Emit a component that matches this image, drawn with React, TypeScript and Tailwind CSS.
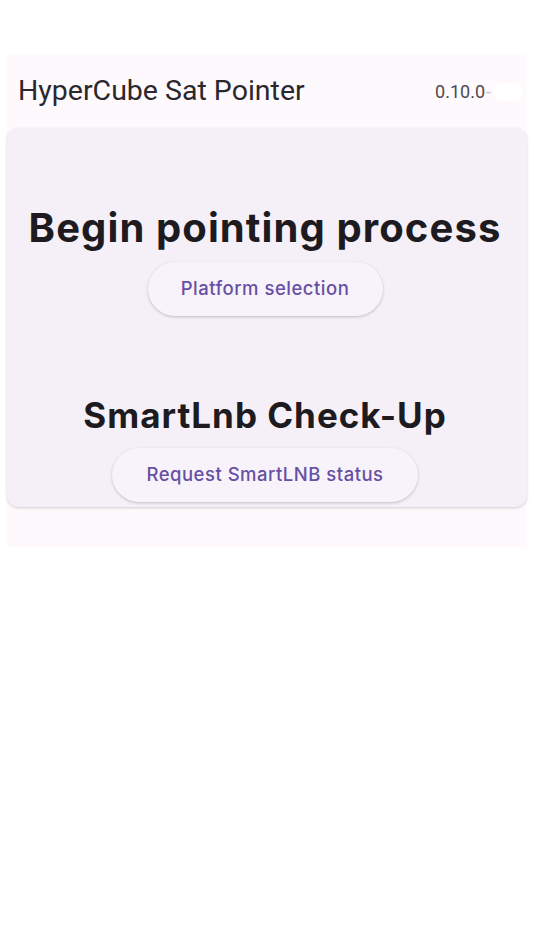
export default function App() {
  return (
    <div className="min-h-[950px] w-[534px] bg-white pt-[55px]" style={{ fontFamily: 'Roboto, "Noto Sans", sans-serif' }}>
      <div className="mx-[7px] h-[492px] bg-[#fef9fd]">
        {/* App bar */}
        <div className="flex h-[73px] items-center justify-between pl-[11px] pr-[4px]">
          <span className="text-[28.5px] font-normal leading-none text-[#2a282d]">HyperCube Sat Pointer</span>
          <span className="flex items-center text-[18px] leading-none text-[#4d4a52]">
            0.10.0
            <span className="ml-[1px] text-[#c9c5ca]">-</span>
            <span className="ml-[2px] inline-block h-[18px] w-[30px] rounded-full bg-white"></span>
          </span>
        </div>

        {/* Card */}
        <div
          className="flex h-[379px] flex-col items-center rounded-[12px] bg-[#f5f0f7] pr-[4px] pt-[76px] shadow-[0_1px_3px_rgba(0,0,0,0.18)]"
          style={{ fontFamily: 'Inter, Roboto, sans-serif' }}
        >
          <h1 className="text-[40px] font-bold leading-[48px] tracking-[1.1px] text-[#1d1b20]">Begin pointing process</h1>
          <button className="mt-[10px] h-[54px] w-[235px] rounded-full bg-[#f8f3fa] text-[18.5px] font-medium tracking-[0.5px] text-[#6750a4] shadow-[0_1px_3px_rgba(0,0,0,0.22)]">
            Platform selection
          </button>
          <h2 className="mt-[78px] text-[35px] font-bold leading-[42px] tracking-[1px] text-[#1d1b20]">SmartLnb Check-Up</h2>
          <button className="mt-[12px] h-[54px] w-[306px] rounded-full bg-[#f8f3fa] text-[18.5px] font-medium tracking-[0.5px] text-[#6750a4] shadow-[0_1px_3px_rgba(0,0,0,0.22)]">
            Request SmartLNB status
          </button>
        </div>
      </div>
    </div>
  )
}
